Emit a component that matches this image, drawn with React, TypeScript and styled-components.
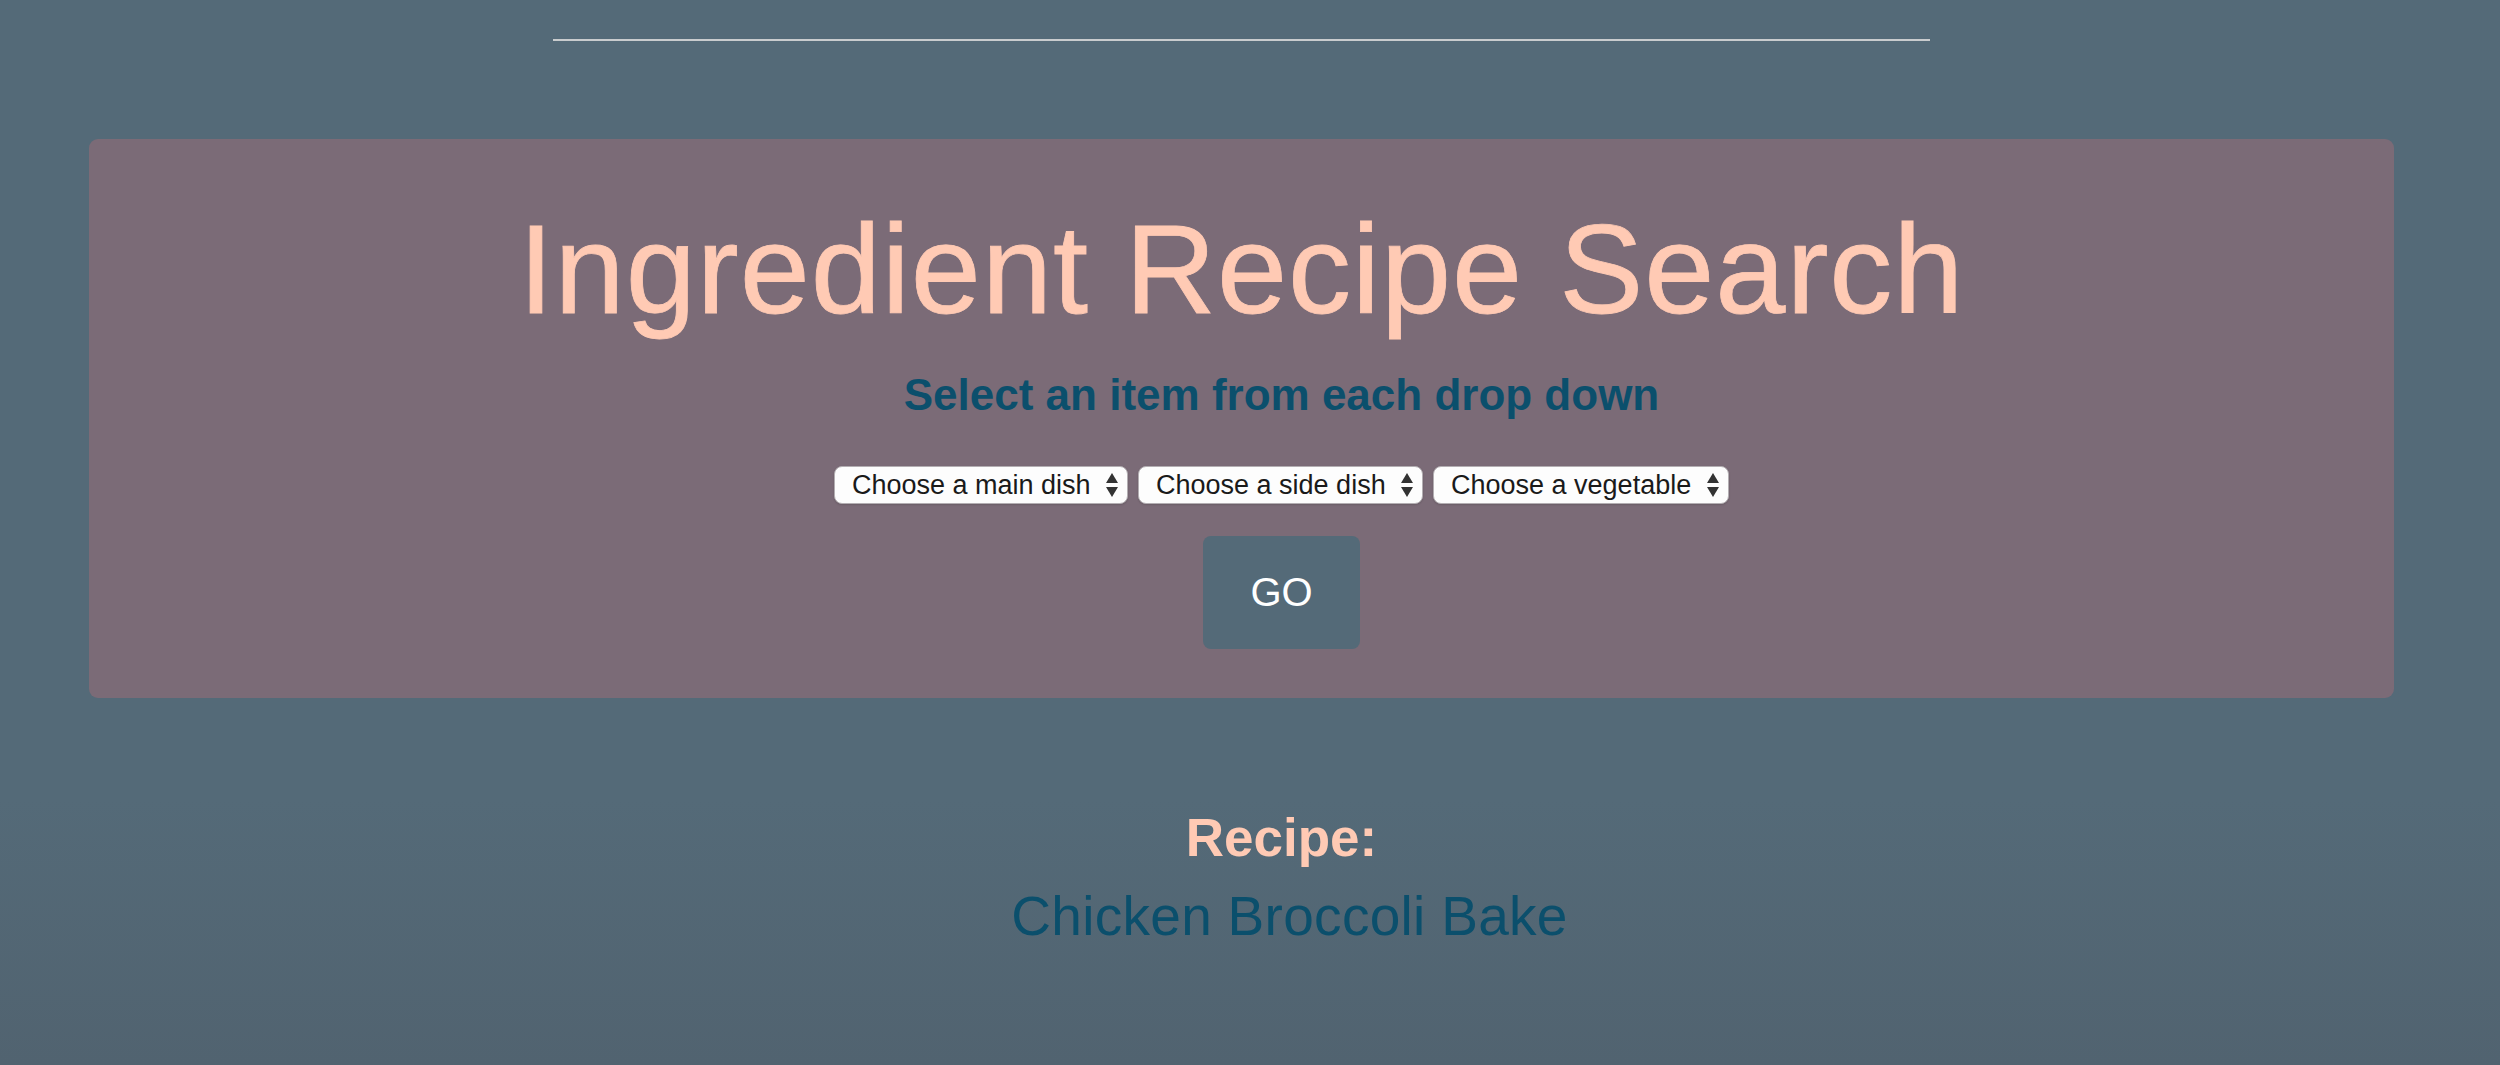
import React, { useState } from "react";
import styled, { createGlobalStyle } from "styled-components";

const GlobalStyle = createGlobalStyle`
  html, body {
    margin: 0;
    padding: 0;
  }
  body {
    font-family: "Liberation Sans", Arial, Helvetica, sans-serif;
    background: #546a78;
  }
`;

const Page = styled.div`
  min-height: 100vh;
  box-sizing: border-box;
  padding: 39px 17px 0 0;
  background: linear-gradient(to bottom, #546a78 0%, #546a78 75%, #516370 100%);
`;

const Rule = styled.div`
  width: 1377px;
  height: 2px;
  margin: 0 auto;
  background: #c9ccce;
`;

const Panel = styled.section`
  margin: 98px 89px 0;
  padding: 61px 0 49px;
  background: #7b6b77;
  border-radius: 9px;
  text-align: center;
`;

const Title = styled.h1`
  margin: 0;
  font-size: 126px;
  line-height: 140px;
  font-weight: 400;
  letter-spacing: 1px;
  color: #ffcab4;
  -webkit-text-stroke: 0.8px #ffcab4;
`;

const Form = styled.div`
  display: flex;
  flex-direction: column;
  align-items: center;
  padding-left: 80px;
`;

const Subtitle = styled.h3`
  margin: 30px 0 0;
  font-size: 44px;
  line-height: 50px;
  font-weight: 700;
  color: #0b4f6c;
`;

const Selects = styled.div`
  display: flex;
  gap: 10px;
  margin-top: 46px;
`;

const SelectWrap = styled.div`
  position: relative;
  height: 38px;
`;

const Select = styled.select`
  appearance: none;
  -webkit-appearance: none;
  box-sizing: border-box;
  height: 38px;
  margin: 0;
  padding: 0 36px 0 17px;
  font-family: "Liberation Sans", Arial, Helvetica, sans-serif;
  font-size: 27px;
  color: #1a1a1a;
  background: #fdfdfd;
  border: 1px solid #b3aeb2;
  border-radius: 8px;
  box-shadow: 0 1px 2px rgba(0, 0, 0, 0.14);
  outline: none;
`;

const Arrows = styled.svg`
  position: absolute;
  right: 9px;
  top: 7px;
  width: 14px;
  height: 24px;
  pointer-events: none;
`;

const GoButton = styled.button`
  width: 157px;
  height: 113px;
  margin-top: 32px;
  border: none;
  border-radius: 8px;
  background: #546a78;
  color: #ffffff;
  font-family: "Liberation Sans", Arial, Helvetica, sans-serif;
  font-size: 40px;
  cursor: pointer;
`;

const Result = styled.div`
  margin-top: 110px;
  padding-left: 80px;
  text-align: center;
`;

const ResultLabel = styled.h3`
  margin: 0;
  font-size: 53px;
  line-height: 60px;
  font-weight: 700;
  color: #ffcab4;
`;

const RecipeName = styled.p`
  margin: 17px 0 0;
  padding-left: 16px;
  font-size: 55px;
  line-height: 62px;
  letter-spacing: 0.3px;
  color: #0b4f6c;
`;

interface DropdownProps {
  label: string;
  options: string[];
  value: string;
  onChange: (v: string) => void;
}

const Dropdown = ({ label, options, value, onChange }: DropdownProps) => (
  <SelectWrap>
    <Select value={value} onChange={(e) => onChange(e.target.value)}>
      <option value="">{label}</option>
      {options.map((o) => (
        <option key={o} value={o}>
          {o}
        </option>
      ))}
    </Select>
    <Arrows viewBox="0 0 14 24">
      <polygon points="7,0 13,10 1,10" fill="#333" />
      <polygon points="1,14 13,14 7,24" fill="#333" />
    </Arrows>
  </SelectWrap>
);

const App = () => {
  const [main, setMain] = useState("");
  const [side, setSide] = useState("");
  const [veg, setVeg] = useState("");

  return (
    <>
      <GlobalStyle />
      <Page>
        <Rule />
        <Panel>
          <Title>Ingredient Recipe Search</Title>
          <Form>
            <Subtitle>Select an item from each drop down</Subtitle>
            <Selects>
              <Dropdown
                label="Choose a main dish"
                options={["Chicken", "Beef", "Pork"]}
                value={main}
                onChange={setMain}
              />
              <Dropdown
                label="Choose a side dish"
                options={["Rice", "Pasta", "Potatoes"]}
                value={side}
                onChange={setSide}
              />
              <Dropdown
                label="Choose a vegetable"
                options={["Broccoli", "Carrots", "Peas"]}
                value={veg}
                onChange={setVeg}
              />
            </Selects>
            <GoButton>GO</GoButton>
          </Form>
        </Panel>
        <Result>
          <ResultLabel>Recipe:</ResultLabel>
          <RecipeName>Chicken Broccoli Bake</RecipeName>
        </Result>
      </Page>
    </>
  );
};

export default App;
